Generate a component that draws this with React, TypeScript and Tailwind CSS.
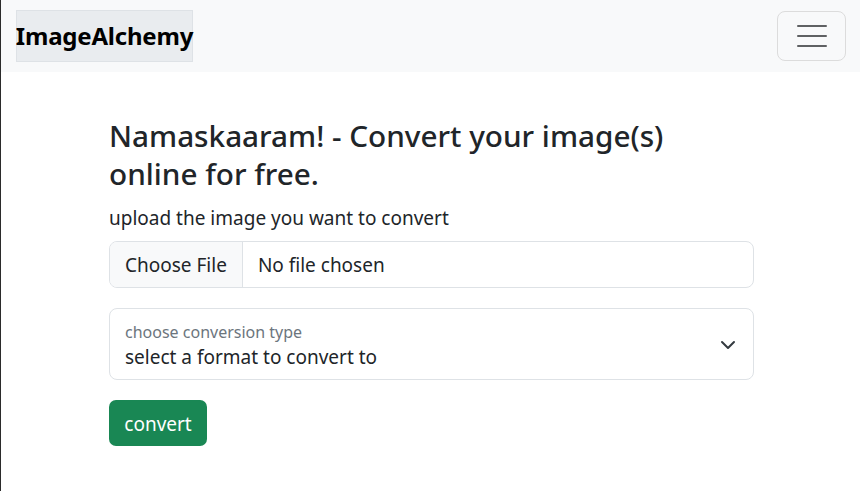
import { useState } from 'react';

export default function App() {
  const [format, setFormat] = useState('');

  return (
    <div
      className="min-h-[491px] bg-white border-l border-[#2b2b2b] text-[#212529]"
      style={{ fontFamily: '"Noto Sans", "Open Sans", sans-serif' }}
    >
      {/* navbar */}
      <nav className="h-[72px] bg-[#f8f9fa] flex items-center justify-between pl-[15px] pr-[14px]">
        <a
          href="#"
          className="h-[52px] w-[177px] flex items-center justify-center bg-[#e9ecef] border border-[#dee2e6] text-black font-bold text-[24px] tracking-[-0.2px]"
        >
          ImageAlchemy
        </a>
        <button
          type="button"
          className="w-[69px] h-[50px] rounded-[8px] border border-[#dcdcdc] flex flex-col items-center justify-center gap-[8px]"
          title="Toggle navigation"
        >
          <span className="block w-[30px] h-[2px] bg-[#5f6163] rounded" />
          <span className="block w-[30px] h-[2px] bg-[#5f6163] rounded" />
          <span className="block w-[30px] h-[2px] bg-[#5f6163] rounded" />
        </button>
      </nav>

      {/* main form */}
      <div className="pl-[2px]">
        <main className="w-[645px] mx-auto pt-[45px]">
          <h3 className="text-[29.7px] leading-[38px] font-medium mb-[10px]">
            Namaskaaram! - Convert your image(s) online for free.
          </h3>
          <label className="block text-[19px] leading-[30px] mb-[8px]">upload the image you want to convert</label>

          <div className="h-[47px] flex border border-[#dee2e6] rounded-[8px] overflow-hidden mb-[20px]">
            <span className="bg-[#f8f9fa] border-r border-[#dee2e6] px-[15px] pt-[2px] flex items-center text-[19px]">
              Choose File
            </span>
            <span className="px-[15px] pt-[2px] flex items-center text-[19px]">No file chosen</span>
          </div>

          <div className="relative h-[72px] border border-[#dee2e6] rounded-[8px] mb-[20px]">
            <span className="absolute left-[15px] top-[11px] text-[16px] text-[#6c757d] leading-[24px]">
              choose conversion type
            </span>
            <select
              value={format}
              onChange={(e) => setFormat(e.target.value)}
              className="appearance-none w-full h-full bg-transparent pl-[15px] pt-[32px] pb-[6px] text-[19px] leading-[30px] outline-none"
            >
              <option value="">select a format to convert to</option>
              <option value="png">png</option>
              <option value="jpg">jpg</option>
              <option value="webp">webp</option>
            </select>
            <svg
              className="absolute right-[17px] top-[28px] pointer-events-none"
              width="16"
              height="16"
              viewBox="0 0 16 16"
            >
              <path d="M2 5l6 6 6-6" fill="none" stroke="#343a40" strokeWidth="2" strokeLinecap="round" strokeLinejoin="round" />
            </svg>
          </div>

          <button
            type="button"
            className="h-[46px] w-[98px] rounded-[7px] bg-[#198754] text-white text-[19px] pt-[3px]"
          >
            convert
          </button>
        </main>
      </div>
    </div>
  );
}
